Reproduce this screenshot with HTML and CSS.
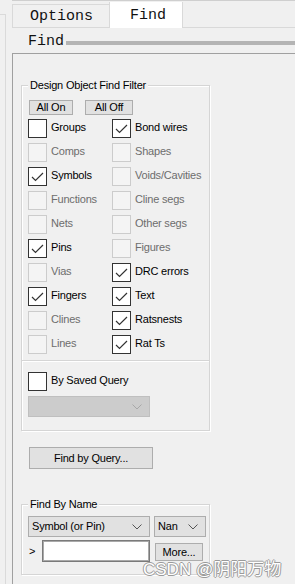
FILE: index.html
```html
<!DOCTYPE html>
<html lang="en">
<head>
  <meta charset="UTF-8" />
  <title>Find</title>
  <meta name="viewport" content="width=device-width, initial-scale=1.0" />
  <link rel="stylesheet" href="styles.css">
</head>
<body>
  <div class="window">
    <div class="side"></div>

    <div class="panel">
      <div class="tabs">
        <div class="tab tab-options">Options</div>
        <div class="tab tab-find">Find</div>
      </div>

      <div class="title">
        <span class="title-text">Find</span>
        <div class="title-bar"></div>
      </div>

      <div class="frame">
        <!-- Design object filter -->
        <div class="group">
          <div class="group-title">Design Object Find Filter</div>
          <div class="section">
            <div class="buttons">
              <button class="btn btn-on">All On</button>
              <button class="btn btn-off">All Off</button>
            </div>

            <div class="checks">
              <label class="check"><span class="box"></span>Groups</label>
              <label class="check"><span class="box"><svg viewBox="0 0 17 17"><polyline points="3,9 6.5,12.5 14,5" /></svg></span>Bond wires</label>

              <label class="check off"><span class="box"></span>Comps</label>
              <label class="check off"><span class="box"></span>Shapes</label>

              <label class="check"><span class="box"><svg viewBox="0 0 17 17"><polyline points="3,9 6.5,12.5 14,5" /></svg></span>Symbols</label>
              <label class="check off"><span class="box"></span>Voids/Cavities</label>

              <label class="check off"><span class="box"></span>Functions</label>
              <label class="check off"><span class="box"></span>Cline segs</label>

              <label class="check off"><span class="box"></span>Nets</label>
              <label class="check off"><span class="box"></span>Other segs</label>

              <label class="check"><span class="box"><svg viewBox="0 0 17 17"><polyline points="3,9 6.5,12.5 14,5" /></svg></span>Pins</label>
              <label class="check off"><span class="box"></span>Figures</label>

              <label class="check off"><span class="box"></span>Vias</label>
              <label class="check"><span class="box"><svg viewBox="0 0 17 17"><polyline points="3,9 6.5,12.5 14,5" /></svg></span>DRC errors</label>

              <label class="check"><span class="box"><svg viewBox="0 0 17 17"><polyline points="3,9 6.5,12.5 14,5" /></svg></span>Fingers</label>
              <label class="check"><span class="box"><svg viewBox="0 0 17 17"><polyline points="3,9 6.5,12.5 14,5" /></svg></span>Text</label>

              <label class="check off"><span class="box"></span>Clines</label>
              <label class="check"><span class="box"><svg viewBox="0 0 17 17"><polyline points="3,9 6.5,12.5 14,5" /></svg></span>Ratsnests</label>

              <label class="check off"><span class="box"></span>Lines</label>
              <label class="check"><span class="box"><svg viewBox="0 0 17 17"><polyline points="3,9 6.5,12.5 14,5" /></svg></span>Rat Ts</label>
            </div>
          </div>

          <div class="separator"></div>

          <div class="section section-saved">
            <label class="check"><span class="box"></span>By Saved Query</label>
            <div class="combo combo-saved disabled">
              <span></span>
              <svg class="chevron" viewBox="0 0 10 6"><polyline points="0.5,0.5 5,5 9.5,0.5" /></svg>
            </div>
          </div>
        </div>

        <button class="btn btn-query">Find by Query...</button>

        <!-- Find by name -->
        <div class="group group-name">
          <div class="group-title">Find By Name</div>
          <div class="section section-name">
            <div class="name-row">
              <div class="combo combo-type">
                <span>Symbol (or Pin)</span>
                <svg class="chevron" viewBox="0 0 10 6"><polyline points="0.5,0.5 5,5 9.5,0.5" /></svg>
              </div>
              <div class="combo combo-nan">
                <span>Nan</span>
                <svg class="chevron" viewBox="0 0 10 6"><polyline points="0.5,0.5 5,5 9.5,0.5" /></svg>
              </div>
            </div>
            <div class="name-row name-input">
              <span class="prompt">&gt;</span>
              <input type="text" class="name-field" />
              <button class="btn btn-more">More...</button>
            </div>
          </div>
        </div>
      </div>
    </div>
  </div>

  <div class="watermark">CSDN @阴阳万物</div>
</body>
</html>
```

FILE: styles.css
```css
* {
  box-sizing: border-box;
}

body {
  margin: 0;
  height: 584px;
  overflow: hidden;
  background-color: #f0f0f0;
  color: #000;
  font-family: "Liberation Sans", Arial, sans-serif;
  font-size: 11px;
  letter-spacing: -0.2px;
}

.window {
  display: flex;
  height: 584px;
}

.side {
  flex: none;
  width: 6px;
  margin-top: 14px;
  border-top: 1px solid #dadada;
  border-right: 1px solid #dadada;
}

.panel {
  flex: 1;
  min-width: 0;
  padding-left: 6px;
}

/* Tabs */
.tabs {
  display: flex;
  align-items: flex-end;
  box-sizing: content-box;
  height: 26px;
  border-top: 1px solid #cfcfcf;
  border-bottom: 1px solid #d9d9d9;
}

.tab {
  font-family: "Liberation Mono", "Courier New", monospace;
  font-size: 15px;
  line-height: 22px;
  letter-spacing: 0;
  color: #111;
}

.tab-options {
  height: 23px;
  padding: 1px 16px 0 17px;
  border-top: 1px solid #d9d9d9;
  border-left: 1px solid #d9d9d9;
}

.tab-find {
  height: 26px;
  margin-bottom: -1px;
  padding: 3px 16px 0 20px;
  background-color: #fff;
  border-left: 1px solid #d9d9d9;
  border-right: 1px solid #d9d9d9;
}

/* Section title */
.title {
  display: flex;
  align-items: flex-start;
  height: 25px;
  padding-left: 16px;
}

.title-text {
  font-family: "Liberation Mono", "Courier New", monospace;
  font-size: 15px;
  line-height: 28px;
  letter-spacing: 0;
  color: #111;
}

.title-bar {
  flex: 1;
  height: 4px;
  margin: 13px 0 0 2px;
  background-color: #b4b4b4;
}

.frame {
  height: 560px;
  border-top: 1px solid #a0a0a0;
  border-left: 1px solid #a0a0a0;
}

/* Group boxes */
.group {
  width: 189px;
  margin: 31px 0 0 8px;
  border: 1px solid #d5d5d5;
  box-shadow: 1px 1px 0 #fff, inset 1px 1px 0 #fff;
}

.group-title {
  width: max-content;
  margin: -7px 0 0 6px;
  padding: 0 2px;
  line-height: 13px;
  background-color: #f0f0f0;
}

.section {
  padding-left: 6px;
}

.buttons {
  display: flex;
  margin-top: 8px;
}

.btn {
  display: block;
  padding: 0;
  border: 1px solid #adadad;
  background-color: #e1e1e1;
  color: #000;
  font: inherit;
  letter-spacing: inherit;
}

.btn-on {
  width: 44px;
  height: 15px;
  margin-left: 1px;
  line-height: 13px;
}

.btn-off {
  width: 48px;
  height: 15px;
  margin-left: 12px;
  line-height: 13px;
}

.checks {
  display: grid;
  grid-template-columns: 84px 1fr;
  grid-auto-rows: 19px;
  row-gap: 5px;
  margin-top: 4px;
}

.check {
  display: flex;
  align-items: flex-start;
  gap: 4px;
  line-height: 16px;
  white-space: nowrap;
}

.box {
  flex: none;
  width: 19px;
  height: 19px;
  border: 1px solid #333;
  background-color: #fff;
}

.box svg {
  display: block;
  width: 17px;
  height: 17px;
  fill: none;
  stroke: #333;
  stroke-width: 1.2;
}

.check.off {
  color: #6d6d6d;
}

.check.off .box {
  border-color: #cccccc;
  background-color: #f4f4f4;
}

.separator {
  margin-top: 6px;
  border-top: 1px solid #d5d5d5;
  border-bottom: 1px solid #fff;
}

.section-saved {
  padding-top: 10px;
  padding-bottom: 13px;
}

.section-saved .check {
  height: 19px;
}

/* Combo boxes */
.combo {
  display: flex;
  align-items: center;
  justify-content: space-between;
  height: 21px;
  padding: 0 7px 0 3px;
  border: 1px solid #adadad;
  background-color: #e1e1e1;
  line-height: 19px;
}

.chevron {
  display: block;
  width: 10px;
  height: 6px;
  fill: none;
  stroke: #555;
  stroke-width: 1;
}

.combo-saved {
  width: 122px;
  margin-top: 5px;
  padding-right: 7px;
}

.combo.disabled {
  border-color: #bfbfbf;
  background-color: #cccccc;
}

.combo.disabled .chevron {
  stroke: #a8a8a8;
}

.btn-query {
  width: 124px;
  height: 22px;
  margin: 16px 0 0 16px;
  line-height: 20px;
}

.group-name {
  margin-top: 35px;
}

.section-name {
  padding-top: 5px;
  padding-bottom: 12px;
}

.name-row {
  display: flex;
}

.combo-type {
  width: 122px;
}

.combo-nan {
  width: 52px;
  margin-left: 4px;
}

.name-input {
  height: 22px;
  margin-top: 3px;
  align-items: center;
}

.prompt {
  width: 14px;
  padding-left: 1px;
}

.name-field {
  width: 108px;
  height: 22px;
  margin: 0;
  padding: 0 3px;
  border: 1px solid #7a7a7a;
  box-shadow: inset 0 0 0 1px #a9a9a9;
  background-color: #fff;
  font: inherit;
  outline: none;
}

.btn-more {
  align-self: flex-start;
  width: 48px;
  height: 18px;
  margin: 3px 0 0 5px;
  line-height: 16px;
}

.watermark {
  position: absolute;
  left: 143px;
  top: 555px;
  font-family: "Liberation Sans", "Noto Sans CJK SC", sans-serif;
  font-size: 17px;
  letter-spacing: 0;
  color: #fff;
  text-shadow: 1px 0 0 #9a9a9a, -1px 0 0 #9a9a9a, 0 1px 0 #9a9a9a, 0 -1px 0 #9a9a9a;
  white-space: nowrap;
}
```
